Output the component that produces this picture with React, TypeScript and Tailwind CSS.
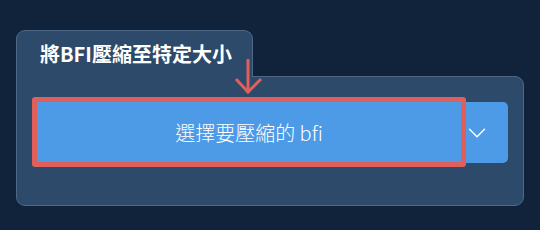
import { ChevronDown } from 'lucide-react'

function DownArrow() {
  return (
    <svg
      className="absolute z-20 left-[234px] top-[56px] pointer-events-none"
      width="30"
      height="40"
      viewBox="0 0 30 40"
      fill="none"
      stroke="#df605b"
      strokeWidth="3"
      strokeLinecap="butt"
    >
      <path d="M14 3 V37" />
      <path d="M2 23 L14 36 L27 23" />
    </svg>
  )
}

export default function App() {
  return (
    <div
      className="relative w-[540px] h-[230px] overflow-hidden bg-[#11233a] pt-[30px] pl-[16px]"
      style={{ fontFamily: '"Noto Sans CJK TC", "Noto Sans", sans-serif' }}
    >
      <div className="relative z-10 -mb-px w-[237px] h-[47px] rounded-t-[9px] border border-b-0 border-[#4e6886] bg-[#2d4a6a] pl-[23px] pt-[8px]">
        <h1 className="text-[20px] leading-[30px] font-bold text-white">將BFI壓縮至特定大小</h1>
      </div>

      <div className="w-[508px] h-[130px] rounded-tr-[9px] rounded-b-[9px] border border-[#4e6886] bg-[#2d4a6a] pl-[20px] pt-[25px]">
        <div className="flex h-[61px] w-[471px]">
          <div className="relative flex-1">
            <button className="flex h-full w-full items-center justify-center bg-[#4d9ae6] text-white text-[20px] font-light">
              選擇要壓縮的 bfi
            </button>
            <div className="absolute -left-[5px] -top-[5px] -right-[5px] -bottom-[4px] rounded-[3px] border-[5px] border-[#df605b] pointer-events-none" />
          </div>
          <button className="flex w-[47px] h-full items-center pl-[1px] rounded-r-[5px] bg-[#4d9ae6] text-white">
            <ChevronDown size={30} strokeWidth={1.2} />
          </button>
        </div>
      </div>

      <DownArrow />
    </div>
  )
}
